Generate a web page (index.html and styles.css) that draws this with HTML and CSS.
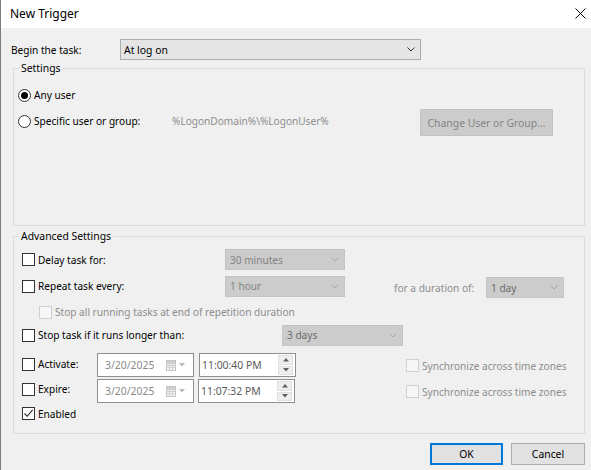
FILE: index.html
```html
<!DOCTYPE html>
<html>
<head>
<meta charset="utf-8">
<title>New Trigger</title>
<link rel="stylesheet" href="styles.css">
</head>
<body>
<div class="window">
  <div class="titlebar">
    <span class="title">New Trigger</span>
    <svg class="close" width="11" height="11" viewBox="0 0 11 11"><path d="M0.5 0.5 L10.5 10.5 M10.5 0.5 L0.5 10.5" stroke="#000" stroke-width="1" fill="none"/></svg>
  </div>
  <div class="content">
    <div class="begin-row">
      <span class="begin-label">Begin the task:</span>
      <div class="combo combo-main"><span class="combo-text">At log on</span><svg class="chev" width="8" height="5" viewBox="0 0 8 5"><path d="M0.5 0.5 L4 4 L7.5 0.5" stroke="#333" fill="none"/></svg></div>
    </div>

    <div class="group group-settings">
      <span class="legend">Settings</span>
      <div class="row row-any">
        <span class="radio checked"></span><span class="text">Any user</span>
      </div>
      <div class="row row-specific">
        <span class="radio"></span><span class="text lbl-specific">Specific user or group:</span>
        <span class="logon-user">%LogonDomain%\%LogonUser%</span>
        <button class="btn-change">Change User or Group...</button>
      </div>
    </div>

    <div class="group group-adv">
      <span class="legend">Advanced Settings</span>
      <div class="row row-delay">
        <span class="check"></span><span class="text lbl-w187">Delay task for:</span>
        <div class="combo combo-dis w120"><span class="combo-text light">30 minutes</span><svg class="chev" width="8" height="5" viewBox="0 0 8 5"><path d="M0.5 0.5 L4 4 L7.5 0.5" stroke="#a8a8a8" fill="none"/></svg></div>
      </div>
      <div class="row row-repeat">
        <span class="check"></span><span class="text lbl-w187">Repeat task every:</span>
        <div class="combo combo-dis w120"><span class="combo-text light">1 hour</span><svg class="chev" width="8" height="5" viewBox="0 0 8 5"><path d="M0.5 0.5 L4 4 L7.5 0.5" stroke="#a8a8a8" fill="none"/></svg></div>
        <span class="text dis lbl-duration">for a duration of:</span>
        <div class="combo combo-dis w78 drop2"><span class="combo-text mid">1 day</span><svg class="chev" width="8" height="5" viewBox="0 0 8 5"><path d="M0.5 0.5 L4 4 L7.5 0.5" stroke="#a8a8a8" fill="none"/></svg></div>
      </div>
      <div class="row row-stopall">
        <span class="check check-dis"></span><span class="text dis">Stop all running tasks at end of repetition duration</span>
      </div>
      <div class="row row-stoptask">
        <span class="check"></span><span class="text lbl-w244">Stop task if it runs longer than:</span>
        <div class="combo combo-dis w121"><span class="combo-text mid">3 days</span><svg class="chev" width="8" height="5" viewBox="0 0 8 5"><path d="M0.5 0.5 L4 4 L7.5 0.5" stroke="#a8a8a8" fill="none"/></svg></div>
      </div>
      <div class="row row-date row-activate">
        <span class="check"></span><span class="text lbl-w59">Activate:</span>
        <div class="datebox">
          <span class="date-text">3/20/2025</span>
          <svg class="cal" width="10" height="11" viewBox="0 0 10 11"><rect x="0.5" y="0.5" width="9" height="10" fill="#f4f4f4" stroke="#c4c4c4"/><path d="M0.5 3.5 H9.5 M0.5 5.5 H9.5 M0.5 7.5 H9.5 M3.5 3.5 V10.5 M6.5 3.5 V10.5" stroke="#d0d0d0" fill="none"/><rect x="1" y="1" width="8" height="2" fill="#cfcfcf"/></svg>
          <svg class="drop" width="6" height="4" viewBox="0 0 6 4"><path d="M0 0 H6 L3 3.5 Z" fill="#b8b8b8"/></svg>
        </div>
        <div class="timebox">
          <span class="time-text">11:00:40 PM</span>
          <div class="spin"><span class="spin-btn"><svg width="6" height="4" viewBox="0 0 6 4"><path d="M0 3.5 H6 L3 0 Z" fill="#606060"/></svg></span><span class="spin-btn"><svg width="6" height="4" viewBox="0 0 6 4"><path d="M0 0 H6 L3 3.5 Z" fill="#606060"/></svg></span></div>
        </div>
        <span class="check check-dis sync-check"></span><span class="text dis">Synchronize across time zones</span>
      </div>
      <div class="row row-date row-expire">
        <span class="check"></span><span class="text lbl-w59">Expire:</span>
        <div class="datebox">
          <span class="date-text">3/20/2025</span>
          <svg class="cal" width="10" height="11" viewBox="0 0 10 11"><rect x="0.5" y="0.5" width="9" height="10" fill="#f4f4f4" stroke="#c4c4c4"/><path d="M0.5 3.5 H9.5 M0.5 5.5 H9.5 M0.5 7.5 H9.5 M3.5 3.5 V10.5 M6.5 3.5 V10.5" stroke="#d0d0d0" fill="none"/><rect x="1" y="1" width="8" height="2" fill="#cfcfcf"/></svg>
          <svg class="drop" width="6" height="4" viewBox="0 0 6 4"><path d="M0 0 H6 L3 3.5 Z" fill="#b8b8b8"/></svg>
        </div>
        <div class="timebox timebox-exp">
          <span class="time-text">11:07:32 PM</span>
          <div class="spin"><span class="spin-btn"><svg width="6" height="4" viewBox="0 0 6 4"><path d="M0 3.5 H6 L3 0 Z" fill="#606060"/></svg></span><span class="spin-btn"><svg width="6" height="4" viewBox="0 0 6 4"><path d="M0 0 H6 L3 3.5 Z" fill="#606060"/></svg></span></div>
        </div>
        <span class="check check-dis sync-check"></span><span class="text dis">Synchronize across time zones</span>
      </div>
      <div class="row row-enabled">
        <span class="check checked"><svg width="11" height="11" viewBox="0 0 11 11"><path d="M1.5 5.5 L4.2 8.3 L9.6 1.8" stroke="#222" stroke-width="1.1" fill="none"/></svg></span><span class="text">Enabled</span>
      </div>
    </div>

    <div class="footer">
      <button class="btn btn-ok">OK</button>
      <button class="btn btn-cancel">Cancel</button>
    </div>
  </div>
</div>
</body>
</html>
```

FILE: styles.css
```css
* { box-sizing: border-box; }

html, body {
  margin: 0;
  padding: 0;
  background: #f0f0f0;
}

body {
  font-family: "Noto Sans", "Open Sans", sans-serif;
  font-size: 10.1px;
  color: #000;
}

.window {
  width: 591px;
  height: 470px;
  background: #f0f0f0;
  border-left: 1px solid #7d7d7d;
  overflow: hidden;
}

.titlebar {
  height: 28px;
  background: #fff;
  display: flex;
  align-items: center;
  justify-content: space-between;
  padding: 0 5px 1px 9px;
}

.title {
  font-size: 12px;
  color: #000;
}

.close {
  display: block;
}

.content {
  display: flex;
  flex-direction: column;
}

.begin-row {
  display: flex;
  align-items: center;
  height: 21px;
  margin-top: 11px;
  padding-left: 10px;
}

.begin-label {
  width: 109px;
}

.combo {
  display: flex;
  align-items: center;
  justify-content: space-between;
  height: 21px;
  padding: 0 5px 0 4px;
}

.combo-main {
  width: 301px;
  background: #e5e5e5;
  border: 1px solid #adadad;
  padding-left: 3px;
  padding-right: 5px;
  font-size: 10.4px;
}

.combo-dis {
  background: #cccccc;
  border: 1px solid #c4c4c4;
}

.combo-text.light { color: #838383; }
.combo-text.mid { color: #6a6a6a; }

.chev { display: block; }

.w120 { width: 120px; }
.w121 { width: 121px; }
.w78 { width: 78px; }

.drop2 {
  align-self: flex-start;
  margin-top: 2px;
}

.group {
  position: relative;
  margin-left: 12px;
  width: 572px;
  border: 1px solid #dcdcdc;
}

.legend {
  position: absolute;
  left: 5px;
  top: -8px;
  padding: 0 2px;
  line-height: 14px;
  background: #f0f0f0;
  font-size: 10.4px;
}

.group-settings {
  margin-top: 8px;
  height: 158px;
  padding: 16px 0 0 4px;
}

.group-adv {
  margin-top: 10px;
  height: 198px;
  padding: 12px 0 0 8px;
}

.row {
  display: flex;
  align-items: center;
}

.radio {
  width: 13px;
  height: 13px;
  border: 1px solid #333;
  border-radius: 50%;
  background: #fff;
  margin-right: 3px;
  display: flex;
  align-items: center;
  justify-content: center;
  flex: none;
}

.radio.checked::after {
  content: "";
  width: 7px;
  height: 7px;
  border-radius: 50%;
  background: #000;
}

.row-any {
  height: 20px;
}

.row-specific {
  height: 27px;
  margin-top: 4px;
}

.row-specific .radio,
.row-specific .text {
  margin-bottom: 3px;
}

.lbl-specific { width: 138px; }

.logon-user {
  width: 248px;
  color: #8d8d8d;
  margin-bottom: 3px;
}

.btn-change {
  width: 133px;
  height: 27px;
  background: #cccccc;
  border: 1px solid #c2c2c2;
  color: #838383;
  font-family: inherit;
  font-size: 10.4px;
  padding: 0;
}

.check {
  width: 13px;
  height: 13px;
  border: 1px solid #333;
  background: #fff;
  margin-right: 3px;
  flex: none;
  display: flex;
  align-items: center;
  justify-content: center;
}

.check svg { display: block; }

.check-dis {
  border-color: #cfcfcf;
  background: #f7f7f7;
}

.text.dis, .dis { color: #8d8d8d; }

.lbl-w187 { width: 187px; }
.lbl-w244 { width: 244px; }
.lbl-w59 { width: 59px; }

.row-delay { height: 21px; }

.row-repeat {
  height: 22px;
  margin-top: 5px;
}

.lbl-duration {
  margin-left: 49px;
  width: 92px;
  margin-top: 4px;
}

.row-stopall {
  height: 20px;
  margin-top: 5px;
  padding-left: 17px;
}

.row-stoptask {
  height: 22px;
  margin-top: 2px;
}

.row-date {
  height: 24px;
}

.row-activate { margin-top: 7px; }
.row-expire { margin-top: 2px; }

.row-activate > .check:first-child,
.row-activate > .lbl-w59 {
  margin-bottom: 2px;
}

.row-expire > .check:first-child,
.row-expire > .lbl-w59 {
  margin-bottom: 4px;
}

.datebox {
  width: 97px;
  height: 24px;
  background: #fff;
  border: 1px solid #8f8f8f;
  display: flex;
  align-items: center;
  padding-left: 7px;
  font-size: 10.4px;
}

.date-text {
  color: #8a8a8a;
  width: 61px;
}

.cal { display: block; margin-top: 1px; }
.drop { display: block; margin-left: 3px; }

.timebox {
  width: 97px;
  height: 24px;
  background: #fff;
  border: 1px solid #8f8f8f;
  display: flex;
  align-items: center;
  justify-content: space-between;
  padding: 0 2px;
  margin-left: 5px;
  font-size: 10.4px;
}

.timebox-exp { margin-left: 4px; }

.time-text { color: #5a5a5a; }

.spin {
  display: flex;
  flex-direction: column;
  width: 15px;
  height: 20px;
  gap: 1px;
}

.spin-btn {
  flex: 1;
  background: #eeeeee;
  border: 1px solid #e0e0e0;
  display: flex;
  align-items: center;
  justify-content: center;
}

.spin-btn svg { display: block; }

.sync-check {
  margin-left: 110px;
}

.row-date .sync-check,
.row-date .sync-check + .text {
  margin-top: 1px;
}

.timebox-exp + .sync-check {
  margin-left: 111px;
}

.row-enabled {
  height: 21px;
}

.footer {
  display: flex;
  justify-content: flex-end;
  gap: 8px;
  margin-top: 9px;
  padding-right: 6px;
}

.btn {
  height: 22px;
  background: #e1e1e1;
  border: 1px solid #adadad;
  font-family: inherit;
  font-size: 10.4px;
  color: #000;
  padding: 0;
}

.btn-ok {
  width: 73px;
  border: 2px solid #0078d7;
}

.btn-cancel {
  width: 74px;
}
```
